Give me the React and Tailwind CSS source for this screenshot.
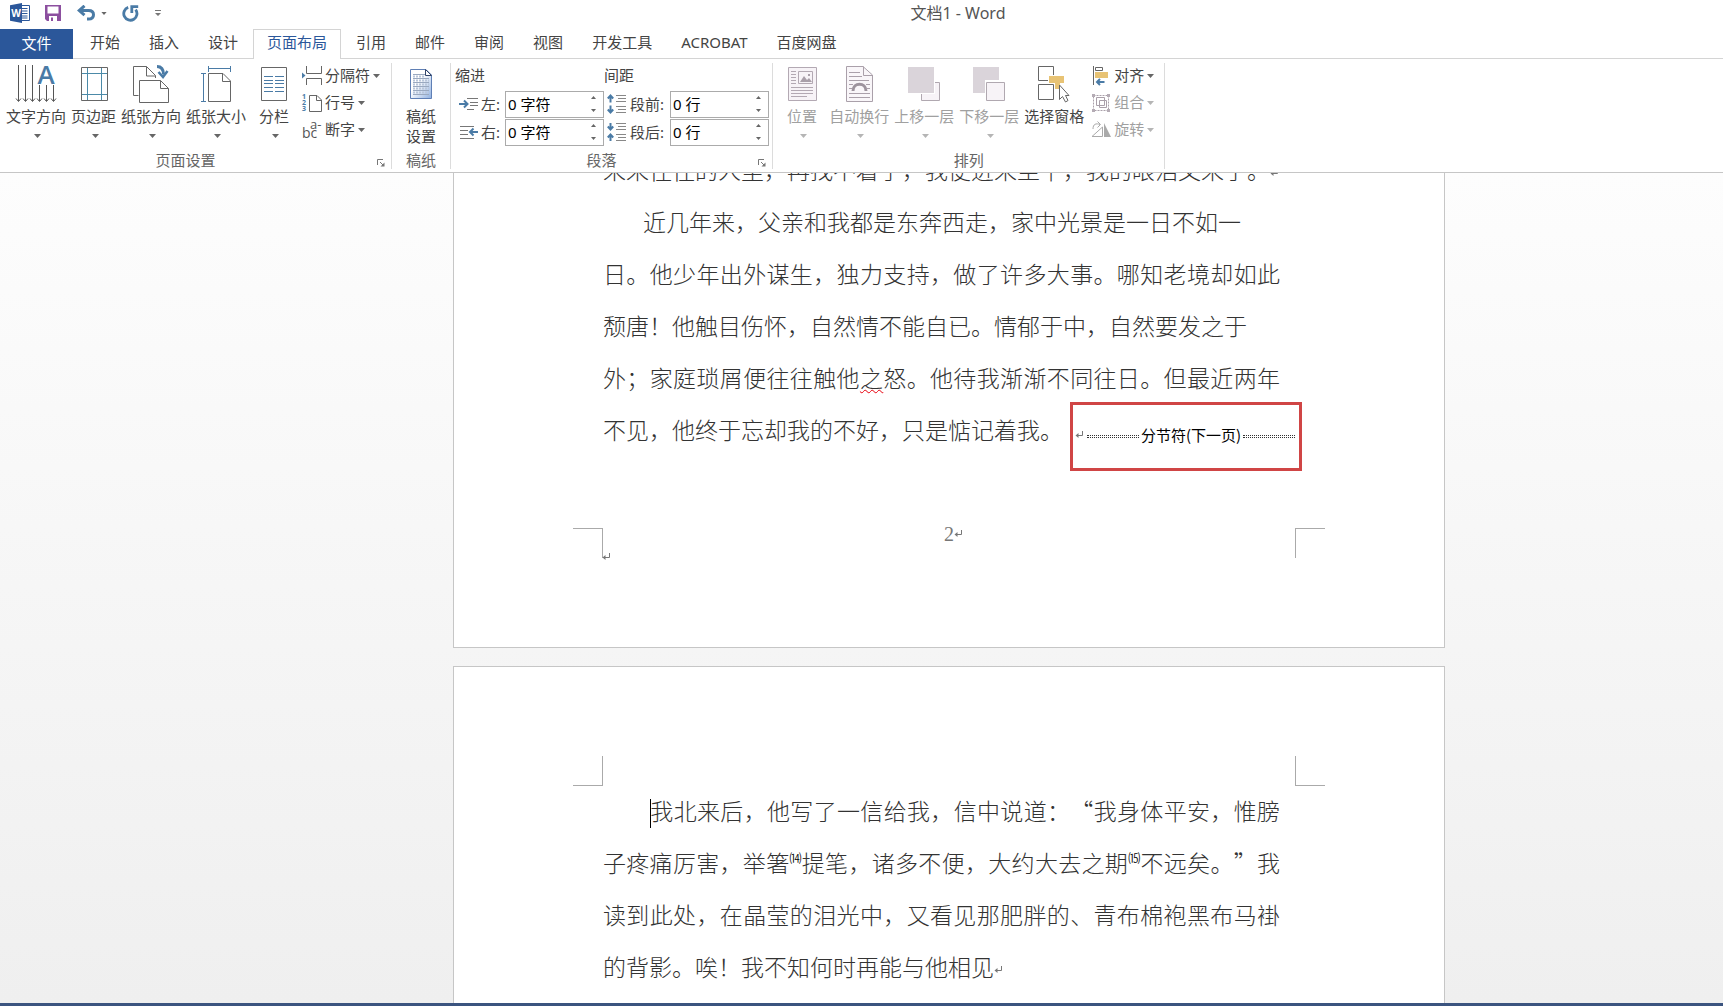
import React, { useState } from 'react';
import clsx from 'clsx';

const TABS = ['开始', '插入', '设计', '页面布局', '引用', '邮件', '审阅', '视图', '开发工具', 'ACROBAT', '百度网盘'];

const Caret = ({ size = 'w-[7px] h-[4px]', className }) => (
  <svg className={clsx('shrink-0', size, className)} viewBox="0 0 7 4" fill="currentColor">
    <path d="M0 0h7L3.5 4z" />
  </svg>
);

const ReturnMark = ({ className }) => (
  <svg className={clsx('w-2 h-2 text-[#777]', className)} viewBox="0 0 8 8" fill="none" stroke="currentColor">
    <path d="M7.5 0v4.5H2" />
    <path d="M3.5 2v5L0.5 4.5z" fill="currentColor" stroke="none" />
  </svg>
);

/* ---------- quick access icons ---------- */

const WordLogo = () => (
  <svg width="20" height="20" viewBox="0 0 20 20">
    <path d="M10 2.5h9.5v15H10z" fill="#fff" stroke="#2b579a" />
    <path d="M12 5.5h5.5M12 8h5.5M12 10.5h5.5M12 13h5.5M12 15h5.5" stroke="#2b579a" />
    <path d="M0 2.2 12 0v20L0 17.8z" fill="#2b579a" />
    <text x="6" y="13.5" fontSize="10" fontWeight="700" fontFamily="Open Sans, sans-serif" fill="#fff" textAnchor="middle">W</text>
  </svg>
);

const SaveIcon = () => (
  <svg width="16" height="16" viewBox="0 0 16 16">
    <path d="M0 0h16v16H2L0 14z" fill="#8c4f9f" />
    <path d="M2.5 1.5h11v7h-11z" fill="#fff" />
    <path d="M4 11h8v5H4z" fill="#fff" />
    <path d="M6 12.5h2V16H6z" fill="#8c4f9f" />
  </svg>
);

const UndoIcon = () => (
  <svg width="18" height="16" viewBox="0 0 18 16" fill="none" stroke="#4a7ba6" strokeWidth="3">
    <path d="M2 5.5h9.5c3 0 5 1.6 5 4.2 0 2.8-2 4.3-5 4.3H10" />
    <path d="M7.5 0.8 2.2 5.5l5.3 4.7" />
  </svg>
);

const RedoIcon = () => (
  <svg width="17" height="17" viewBox="0 0 17 17" fill="none" stroke="#4a7ba6" strokeWidth="2.8">
    <path d="M6.2 2.4A6.6 6.6 0 1 0 13.6 4.6" />
    <path d="M9.8 8V1.6h6.4" />
  </svg>
);

/* ---------- large ribbon icons ---------- */

const TextDirectionIcon = () => (
  <svg className="overflow-visible" width="40" height="40" viewBox="0 0 40 40" fill="none" stroke="#555">
    <path d="M2.5 2v36M9.5 2v36M16.5 2v36M23.5 22v16M30.5 22v16M37.5 22v16" />
    <path d="M0 35.5 2.5 38.5 5 35.5M7 35.5l2.5 3 2.5-3M14 35.5l2.5 3 2.5-3M21 35.5l2.5 3 2.5-3M28 35.5l2.5 3 2.5-3M35 35.500l2.500 3 2.500-3" />
    <text x="30" y="21" fontSize="26" fontWeight="600" fontFamily="Open Sans, sans-serif" fill="#4a7ba6" stroke="none" textAnchor="middle">A</text>
  </svg>
);

const MarginsIcon = () => (
  <svg width="28" height="40" viewBox="0 0 28 40" fill="none">
    <path d="M1.5 4.5h26v33h-26z" stroke="#666" />
    <path d="M7.5 5v32M21.5 5v32M2 10.5h25M2 31.5h25" stroke="#4c8aa8" />
  </svg>
);

const OrientationIcon = () => (
  <svg width="38" height="40" viewBox="0 0 38 40" fill="none" stroke="#666">
    <path d="M6.5 32.5H1.5V3.500H14.500L23.500 12.500V15" />
    <path d="M14.500 3.500v9.500h9" />
    <path d="M7.500 17.500H28.500L36.500 25.500V39.500H7.500z" fill="#fff" />
    <path d="M28.500 17.500V25.500H36.500" />
    <path d="M25 3.500c4 0 6.500 2.500 6.500 8" stroke="#4a7ba6" strokeWidth="3" />
    <path d="M26.500 9 31 14 35.500 8" stroke="#4a7ba6" strokeWidth="2.500" />
  </svg>
);

const SizeIcon = () => (
  <svg width="34" height="40" viewBox="0 0 34 40" fill="none">
    <path d="M9.500 10.500H24L31.500 18V38.500H9.500z" stroke="#666" />
    <path d="M23.500 10.500V18.500H31.500" stroke="#666" />
    <path d="M9.500 3v6M31.500 3v6M10 5.500h21M2 10.500h5M2 38.500h5M4.500 11v27" stroke="#4a7ba6" />
  </svg>
);

const ColumnsIcon = () => (
  <svg width="28" height="40" viewBox="0 0 28 40" fill="none">
    <path d="M1.500 4.500h25v33h-25z" stroke="#666" />
    <path d="M4 13.500h9M4 17.500h9M4 20.500h9M4 24.500h9M4 28.500h9M15 13.500h9M15 17.500h9M15 20.500h9M15 24.500h9M15 28.500h9" stroke="#4a7ba6" />
  </svg>
);

const ManuscriptIcon = () => (
  <svg width="24" height="40" viewBox="0 0 24 40" fill="none">
    <defs>
      <linearGradient id="sheet" x1="0" y1="0" x2="1" y2="1">
        <stop offset="0.4" stopColor="#fff" />
        <stop offset="1" stopColor="#8fb0e0" />
      </linearGradient>
    </defs>
    <path d="M1.500 6.500H17L22.500 12V35.500H1.500z" fill="url(#sheet)" stroke="#5f7fb5" />
    <path d="M16.500 6.500V12.500H22.500z" fill="#fff" stroke="#34466b" />
    <path d="M4 11.500h12M4 15.500h16M4 19.500h16M4 23.500h16M4 27.500h16M4 31.500h16" stroke="#9aa9c0" />
    <path d="M4 13.500h12M4 17.500h16M4 21.500h16M4 25.500h16M4 29.500h16" stroke="#b9c6da" strokeDasharray="2 1" strokeWidth="2" />
  </svg>
);

const PositionIcon = () => (
  <svg width="30" height="40" viewBox="0 0 30 40" fill="none" stroke="#b3a9b3">
    <path d="M1.500 4.500h28v33h-28z" fill="#f7f3f7" />
    <path d="M11.500 8.500h14v12h-14z" />
    <path d="M13 19l4-6 3 4 2-2 3 4z" fill="#a99fa9" stroke="none" />
    <path d="M21 11h2v2h-2z" fill="#a99fa9" stroke="none" />
    <path d="M4 8.500h5M4 11.500h5M4 14.500h5M4 17.500h5M4 20.500h5M4 24.500h22M4 27.500h22M4 30.500h22M4 33.500h16" />
  </svg>
);

const WrapIcon = () => (
  <svg width="28" height="40" viewBox="0 0 28 40" fill="none" stroke="#aaa0aa">
    <path d="M1.500 3.500H18L27.500 12V38.500H1.500z" fill="#f9f6f9" />
    <path d="M18.500 3.500V12.500H27.500" />
    <path d="M4 9.500h11M4 13.500h13M4 17.500h20M4 21.500h4M21 21.500h4M4 25.500h3M22 25.500h3M4 30.500h21M4 34.500h21" />
    <path d="M8 28c0-9 13-9 13 0" stroke="#9d939d" strokeWidth="3" />
  </svg>
);

const ForwardIcon = () => (
  <svg width="32" height="40" viewBox="0 0 32 40">
    <path d="M13.500 19.500h18v18h-18z" fill="#f7f3f7" stroke="#b0a8b0" />
    <path d="M0 4h27v27H0z" fill="#fff" />
    <path d="M0 4h26v26H0z" fill="#dad4da" />
  </svg>
);

const BackwardIcon = () => (
  <svg width="32" height="40" viewBox="0 0 32 40">
    <path d="M0 4h26v26H0z" fill="#dad4da" />
    <path d="M12 17h20v21H12z" fill="#fff" />
    <path d="M13.500 19.500h18v18h-18z" fill="#f7f3f7" stroke="#b0a8b0" />
  </svg>
);

const SelectionPaneIcon = () => (
  <svg width="32" height="40" viewBox="0 0 32 40" fill="none" stroke="#666">
    <path d="M15.500 12V3.500H0.500V17.500H10" />
    <path d="M11 13h15v7h-4v6h-5v-6h-6z" fill="#e8c374" stroke="none" />
    <path d="M0.500 21.500h15v15h-15z" fill="#fff" />
    <path d="M21.500 22V36.500L24.500 33.500L27.500 39L30 37.500L27.500 32.500H31z" fill="#fff" />
  </svg>
);

/* ---------- small ribbon icons ---------- */

const BreaksIcon = () => (
  <svg width="20" height="20" viewBox="0 0 20 20" fill="none" stroke="#666">
    <path d="M4.500 0v7.500h15V0M4.500 19v-6.500h15V19" />
    <path d="M0 6.500 3.500 9.500 0 12.500z" fill="#4a7ba6" stroke="none" />
  </svg>
);

const LineNumbersIcon = () => (
  <svg className="overflow-visible" width="20" height="20" viewBox="0 0 20 20" fill="none" stroke="#666">
    <path d="M7.500 2.500H15L19.500 7V18.500H7.500z" />
    <path d="M14.500 2.500V7.500H19.500" />
    <g fontSize="7" fontWeight="700" fontFamily="Open Sans, sans-serif" fill="#4a7ba6" stroke="none">
      <text x="0" y="6">1</text>
      <text x="0" y="12">2</text>
      <text x="0" y="18">3</text>
    </g>
  </svg>
);

const HyphenationIcon = () => (
  <svg className="overflow-visible" width="20" height="20" viewBox="0 0 20 20" fontFamily="Open Sans, sans-serif" fill="#555">
    <text x="0" y="18" fontSize="14">bc</text>
    <text x="8" y="9" fontSize="13">a-</text>
  </svg>
);

const IndentLeftIcon = () => (
  <svg width="19" height="16" viewBox="0 0 19 16" fill="none">
    <path d="M8 2.500h11M11 6.500h8M11 9.500h8M8 13.500h7" stroke="#777" />
    <path d="M0 8h8M5 4.500 8.500 8 5 11.500" stroke="#4a7ba6" strokeWidth="2" />
  </svg>
);

const IndentRightIcon = () => (
  <svg width="19" height="16" viewBox="0 0 19 16" fill="none">
    <path d="M1 2.500h14M1 6.500h8M1 10.500h8M1 14.500h14" stroke="#777" />
    <path d="M11 8h8M14.500 4.500 11 8l3.500 3.500" stroke="#4a7ba6" strokeWidth="2" />
  </svg>
);

const SpaceBeforeIcon = () => (
  <svg width="20" height="20" viewBox="0 0 20 20" fill="none">
    <path d="M9 1.500h10M11 4.500h8M9 7.500h10M9 12.500h10M11 15.500h8M9 18.500h10" stroke="#888" />
    <path d="M3.500 8.500V2M0.800 4.500 3.500 1.500l2.700 3M3.500 11.500V18M0.800 15.500l2.700 3 2.700-3" stroke="#4a7ba6" strokeWidth="2" />
  </svg>
);

const SpaceAfterIcon = () => (
  <svg width="20" height="20" viewBox="0 0 20 20" fill="none">
    <path d="M9 1.500h10M11 4.500h8M9 7.500h10M9 12.500h10M11 15.500h8M9 18.500h10" stroke="#888" />
    <path d="M3.500 1v6M0.800 4.500l2.700 3 2.700-3M3.500 19v-6M0.800 15.500l2.700-3 2.700 3" stroke="#4a7ba6" strokeWidth="2" />
  </svg>
);

const AlignIcon = () => (
  <svg width="20" height="20" viewBox="0 0 20 20" fill="none">
    <path d="M2.500 0v19" stroke="#666" />
    <path d="M4.500 1.500h7v3h-7z" stroke="#666" />
    <path d="M4 6h13v6H4z" fill="#e8c374" />
    <path d="M5.500 16h8M9 13l-3 3 3 3" stroke="#4a7ba6" strokeWidth="2" />
  </svg>
);

const GroupIcon = () => (
  <svg width="20" height="20" viewBox="0 0 20 20" fill="none" stroke="#aaa0aa">
    <path d="M2.500 2.500h15v15h-15z" strokeDasharray="2 1" />
    <path d="M5.500 4.500h8v8h-8zM8.500 7.500h7v7h-7z" />
    <path d="M1 1h3v3H1zM16 1h3v3h-3zM1 16h3v3H1zM16 16h3v3h-3z" fill="#b5acb5" stroke="none" />
  </svg>
);

const RotateIcon = () => (
  <svg width="20" height="20" viewBox="0 0 20 20" fill="none" stroke="#aaa">
    <path d="M11.500 7V16.500H1z" />
    <path d="M13 3v14h7z" fill="#aaa" stroke="none" />
    <path d="M2 9C2 4 5 3 9 4.500M6.500 1.500l3 3-3 3" />
  </svg>
);

/* ---------- ribbon building blocks ---------- */

const LargeButton = ({ icon: Icon, label, disabled, menu = true, className }) => (
  <button
    type="button"
    disabled={disabled}
    className={clsx('flex flex-col items-center self-start whitespace-nowrap', disabled ? 'text-[#a0a0a0]' : 'text-[#444]', className)}
  >
    <Icon />
    <span className="mt-[3px] leading-5">{label}</span>
    {menu && <Caret className={clsx('mt-2 ml-[3px]', disabled ? 'text-[#b5b5b5]' : 'text-[#666]')} />}
  </button>
);

const SmallButton = ({ icon: Icon, label, disabled }) => (
  <button
    type="button"
    disabled={disabled}
    className={clsx('flex items-center gap-[3px] h-[27px] pb-0.5 whitespace-nowrap', disabled ? 'text-[#a0a0a0]' : 'text-[#444]')}
  >
    <Icon />
    <span>{label}</span>
    <Caret className={disabled ? 'text-[#b5b5b5]' : 'text-[#666]'} />
  </button>
);

const Group = ({ title, launcher, className, children }) => (
  <section className="flex flex-col border-r border-[#dcdcdc]">
    <div className={clsx('flex flex-1', className)}>{children}</div>
    <footer className={clsx('relative h-[18px] leading-[18px] text-center text-[#666]', launcher && 'pr-5')}>
      {title}
      {launcher && (
        <button type="button" aria-label={title} className="absolute right-1.5 bottom-0.5">
          <svg width="8" height="8" viewBox="0 0 8 8" fill="none" stroke="#777">
            <path d="M0.500 6V0.500H6M3 3l3 3" />
            <path d="M7.500 3.500v4h-4z" fill="#777" stroke="none" />
          </svg>
        </button>
      )}
    </footer>
  </section>
);

const Spinner = ({ id, icon: Icon, label, unit }) => {
  const [value, setValue] = useState(0);
  return (
    <div className="flex items-center h-7">
      <Icon />
      <label htmlFor={id} className="flex-1 pl-[3px] whitespace-nowrap">{label}</label>
      <div className="flex w-[99px] h-[27px] border border-[#ababab] bg-white">
        <input
          id={id}
          value={`${value} ${unit}`}
          onChange={(e) => setValue(parseInt(e.target.value, 10) || 0)}
          className="flex-1 min-w-0 pl-0.5 text-black outline-none"
        />
        <div className="flex flex-col justify-around items-center w-5 text-[#666]">
          <button type="button" aria-label={`${label} +`} onClick={() => setValue(value + 1)}>
            <Caret size="w-[5px] h-[3px]" className="rotate-180" />
          </button>
          <button type="button" aria-label={`${label} -`} onClick={() => setValue(Math.max(0, value - 1))}>
            <Caret size="w-[5px] h-[3px]" />
          </button>
        </div>
      </div>
    </div>
  );
};

const TitleBar = () => (
  <header className="flex items-center h-[29px] pl-2.5 pb-[3px] text-[#666]">
    <button type="button" aria-label="Word"><WordLogo /></button>
    <button type="button" aria-label="保存" className="ml-[15px]"><SaveIcon /></button>
    <button type="button" aria-label="撤消" className="ml-4 flex items-center gap-1.5">
      <UndoIcon />
      <Caret size="w-[6px] h-[3px]" />
    </button>
    <button type="button" aria-label="重复" className="ml-[15px]"><RedoIcon /></button>
    <button type="button" aria-label="自定义" className="ml-4">
      <svg width="6" height="8" viewBox="0 0 6 8" fill="#777">
        <path d="M0 1h6v1H0zM0 4h6L3 7z" />
      </svg>
    </button>
    <h1 className="flex-1 pl-8 text-center text-base text-[#555]">文档1 - Word</h1>
  </header>
);

const TabBar = ({ active, onSelect }) => (
  <nav className="flex h-[30px] border-b border-[#d4d4d4]">
    <button type="button" className="w-[73px] -mb-px pb-0.5 bg-[#2b579a] text-white">文件</button>
    <div className="flex gap-px pl-[3px]">
      {TABS.map((tab) => (
        <button
          key={tab}
          type="button"
          onClick={() => onSelect(tab)}
          className={clsx(
            'px-[13px] pb-1 border-x border-t -mb-px whitespace-nowrap',
            tab === active ? 'border-[#d4d4d4] bg-white text-[#2b579a]' : 'border-transparent text-[#444]'
          )}
        >
          {tab}
        </button>
      ))}
    </div>
  </nav>
);

const Ribbon = () => (
  <div className="flex h-[114px] pt-1 pb-[3px] border-b border-[#c6c6c6]">
    <Group title="页面设置" launcher className="gap-[5px] pl-1.5 pr-[11px]">
      <LargeButton icon={TextDirectionIcon} label="文字方向" />
      <LargeButton icon={MarginsIcon} label="页边距" />
      <LargeButton icon={OrientationIcon} label="纸张方向" />
      <LargeButton icon={SizeIcon} label="纸张大小" />
      <LargeButton icon={ColumnsIcon} label="分栏" className="ml-2" />
      <div className="flex flex-col items-start pl-2">
        <SmallButton icon={BreaksIcon} label="分隔符" />
        <SmallButton icon={LineNumbersIcon} label="行号" />
        <SmallButton icon={HyphenationIcon} label="断字" />
      </div>
    </Group>
    <Group title="稿纸" className="px-3.5">
      <LargeButton icon={ManuscriptIcon} label={<>稿纸<br />设置</>} menu={false} />
    </Group>
    <Group title="段落" launcher className="pl-1 pr-[3px] text-[#444]">
      <div className="w-[149px]">
        <div className="h-[27px] leading-[25px]">缩进</div>
        <div className="pl-1">
          <Spinner id="indent-left" icon={IndentLeftIcon} label="左:" unit="字符" />
          <Spinner id="indent-right" icon={IndentRightIcon} label="右:" unit="字符" />
        </div>
      </div>
      <div className="w-[165px]">
        <div className="h-[27px] leading-[25px]">间距</div>
        <div className="pl-[3px]">
          <Spinner id="space-before" icon={SpaceBeforeIcon} label="段前:" unit="行" />
          <Spinner id="space-after" icon={SpaceAfterIcon} label="段后:" unit="行" />
        </div>
      </div>
    </Group>
    <Group title="排列" className="gap-[5px] pl-3.5 pr-2.5">
      <LargeButton icon={PositionIcon} label="位置" disabled className="mr-[7px]" />
      <LargeButton icon={WrapIcon} label="自动换行" disabled />
      <LargeButton icon={ForwardIcon} label="上移一层" disabled />
      <LargeButton icon={BackwardIcon} label="下移一层" disabled />
      <LargeButton icon={SelectionPaneIcon} label="选择窗格" menu={false} />
      <div className="flex flex-col items-start pl-0.5">
        <SmallButton icon={AlignIcon} label="对齐" />
        <SmallButton icon={GroupIcon} label="组合" disabled />
        <SmallButton icon={RotateIcon} label="旋转" disabled />
      </div>
    </Group>
  </div>
);

/* ---------- document ---------- */

const SectionBreak = () => (
  <span className="absolute left-full -top-px ml-[7px] flex items-center w-[232px] h-[69px] pb-1 pl-0.5 pr-1 border-3 border-[#d04545] text-[15px] leading-5 text-black">
    <ReturnMark className="w-1.5 h-1.5" />
    <span className="flex-1 h-[3px] ml-1 mt-1 border-y border-dotted border-[#333]" />
    <span className="px-0.5 font-normal whitespace-nowrap">分节符(下一页)</span>
    <span className="flex-1 h-[3px] mt-1 border-y border-dotted border-[#333]" />
  </span>
);

const Note = ({ children }) => (
  <sup className="top-0 align-[9px] text-xs leading-none font-normal text-black">{children}</sup>
);

const Document = () => (
  <main className="flex-1 min-h-0 overflow-hidden flex flex-col items-center pl-[175px] bg-linear-to-b from-[#fdfdfd] to-[#efefef] font-['Noto_Sans_CJK_SC',sans-serif] text-[23px] leading-[52px] font-light text-[#333] [text-spacing-trim:space-all]">
    <article className="shrink-0 w-[992px] px-[119px] pb-[89px] bg-white border-x border-b border-[#c6c6c6]">
      <div className="-mt-[30px] pl-[30px] pr-[45px]">
        <p className="whitespace-nowrap">
          来来往往的人里，再找不着了，我便进来坐下，我的眼泪又来了。
          <ReturnMark className="inline-block" />
        </p>
        <p className="indent-10 text-justify">
          近几年来，父亲和我都是东奔西走，家中光景是一日不如一
          <br />
          日。他少年出外谋生，独力支持，做了许多大事。哪知老境却如此颓唐！他触目伤怀，自然情不能自已。情郁于中，自然要发之于
          <br />
          外；家庭琐屑便往往触他
          <span className="underline decoration-wavy decoration-red-600 decoration-1 underline-offset-2">之</span>
          怒。他待我渐渐不同往日。但最近两年
          <span className="relative indent-0 whitespace-nowrap inline-block leading-[52px]">
            不见，他终于忘却我的不好，只是惦记着我。
            <SectionBreak />
          </span>
        </p>
      </div>
      <div className="flex justify-between h-[30px] mt-[73px]">
        <span className="relative w-[30px] border-t border-r border-[#aaa]">
          <ReturnMark className="absolute left-full top-6" />
        </span>
        <span className="flex items-center self-start h-3 pl-2 font-['Liberation_Serif',serif] text-xl leading-none font-normal text-[#777]">
          2<ReturnMark />
        </span>
        <span className="w-[30px] border-t border-l border-[#aaa]" />
      </div>
    </article>

    <article className="shrink-0 w-[992px] mt-[18px] px-[119px] pt-[89px] pb-10 bg-white border border-[#c6c6c6]">
      <div className="flex justify-between h-[30px]">
        <span className="w-[30px] border-b border-r border-[#aaa]" />
        <span className="w-[30px] border-b border-l border-[#aaa]" />
      </div>
      <p className="-mt-0.5 pl-[30px] pr-[45px] indent-[47px] text-justify">
        <span className="inline-block w-px h-[29px] -mr-px bg-black align-middle" />
        我北来后，他写了一信给我，信中说道：“我身体平安，惟膀子疼痛厉害，举箸
        <Note>⒁</Note>
        提笔，诸多不便，大约大去之期
        <Note>⒂</Note>
        不远矣。”我读到此处，在晶莹的泪光中，又看见那肥胖的、青布棉袍黑布马褂的背影。唉！我不知何时再能与他相见
        <ReturnMark className="inline-block" />
      </p>
    </article>
  </main>
);

const App = () => {
  const [tab, setTab] = useState('页面布局');

  return (
    <div className="flex flex-col h-screen overflow-hidden bg-white font-['Noto_Sans','Noto_Sans_CJK_SC',sans-serif] text-[15px]">
      <TitleBar />
      <TabBar active={tab} onSelect={setTab} />
      <Ribbon />
      <Document />
      <div className="h-[3px] shrink-0 bg-[#3b547f]" />
    </div>
  );
};

export default App;
